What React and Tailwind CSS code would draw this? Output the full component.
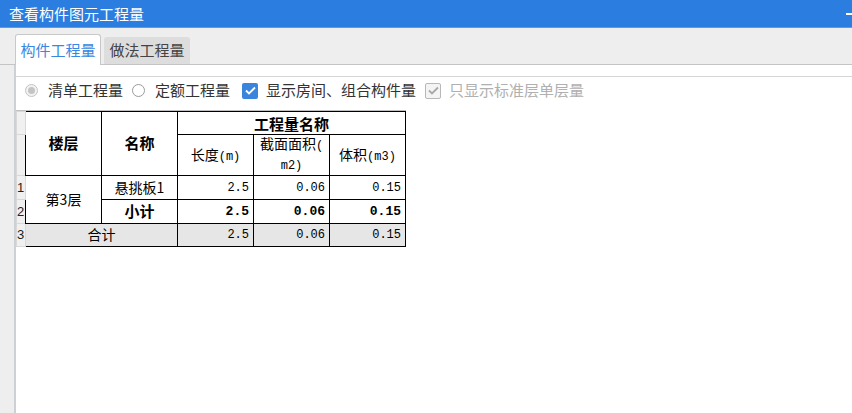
import React from 'react'

const cjk = { fontFamily: '"Noto Sans CJK SC", "Noto Sans", sans-serif' }
const mono = { fontFamily: '"Liberation Mono", "Noto Sans CJK SC", monospace' }
const sans = { fontFamily: '"Liberation Sans", "Noto Sans", sans-serif' }

const Radio = ({ checked, disabled }) => (
  <span
    className={`w-[13px] h-[13px] rounded-full border flex items-center justify-center ${
      disabled ? 'border-[#c4c4c4] bg-[#f2f2f2]' : 'border-[#9a9a9a] bg-white'
    }`}
  >
    {checked && <span className='w-[7px] h-[7px] rounded-full bg-[#c4c4c4]' />}
  </span>
)

const Check = ({ disabled }) => (
  <span
    className={`w-[16px] h-[16px] rounded-[2px] flex items-center justify-center ${
      disabled ? 'border border-[#b8b8b8] bg-[#f4f4f4]' : 'bg-[#3a84de]'
    }`}
  >
    <svg width='11' height='9' viewBox='0 0 11 9'>
      <path
        d='M1 4.5 L4 7.5 L10 1.5'
        fill='none'
        stroke={disabled ? '#a8a8a8' : '#ffffff'}
        strokeWidth='1.8'
      />
    </svg>
  </span>
)

const td = 'border border-black p-0'
const rn = 'border border-[#d8d8d8] bg-[#f0f0f0] p-0 text-[13px] text-[#222] text-left leading-none'
const num = 'border border-black p-0 text-right pr-[4px] text-[12px]'

const App = () => {
  return (
    <div className='w-[852px] h-[413px] bg-[#eeeeee] flex flex-col overflow-hidden' style={cjk}>
      <div className='h-[28px] bg-[#2b7ddf] flex items-center justify-between pl-[9px] border-b border-[#5b9ae6]'>
        <span className='text-white text-[15px] leading-none'>查看构件图元工程量</span>
        <span className='w-[6px] h-[2px] bg-white' />
      </div>

      <div className='h-[37px] flex items-end pl-[15px] border-b border-[#c4c4c4]'>
        <div className='w-[86px] h-[31px] -mb-px bg-white border border-b-0 border-[#c8c8c8] rounded-t-[3px] flex items-center justify-center text-[15px] text-[#3a87e0]'>
          构件工程量
        </div>
        <div className='ml-[3px] w-[86px] h-[27px] bg-[#dddddd] rounded-t-[3px] flex items-center justify-center text-[15px] text-[#444]'>
          做法工程量
        </div>
      </div>

      <div className='flex-1 ml-[14px] bg-white border-l-2 border-[#cdd1d6] flex flex-col'>
        <div className='h-[11px]' />
        <div className='h-[28px] border-t border-[#d6d6d6] flex items-center pl-[9px] text-[15px] text-[#333]'>
          <Radio checked disabled />
          <span className='ml-[10px]'>清单工程量</span>
          <span className='ml-[9px]'><Radio /></span>
          <span className='ml-[10px]'>定额工程量</span>
          <span className='ml-[12px]'><Check /></span>
          <span className='ml-[8px]'>显示房间、组合构件量</span>
          <span className='ml-[9px]'><Check disabled /></span>
          <span className='ml-[8px] text-[#b0b0b0]'>只显示标准层单层量</span>
        </div>

        <div className='mt-[6px] w-[390px] border-t border-[#c0c0c0]'>
          <table className='border-collapse table-fixed w-[390px]'>
            <colgroup>
              <col className='w-[9px]' />
              <col className='w-[76px]' />
              <col className='w-[76px]' />
              <col className='w-[76px]' />
              <col className='w-[76px]' />
              <col className='w-[76px]' />
            </colgroup>
            <tbody>
              <tr className='h-[23px]'>
                <td className={rn} />
                <td rowSpan={2} className={`${td} text-center text-[15px] font-bold`}>楼层</td>
                <td rowSpan={2} className={`${td} text-center text-[15px] font-bold`}>名称</td>
                <td colSpan={3} className={`${td} text-center text-[15px] font-bold leading-none`}>工程量名称</td>
              </tr>
              <tr className='h-[41px]'>
                <td className={rn} />
                <td className={`${td} text-center text-[14px]`}>
                  长度<span style={mono} className='text-[12px]'>(m)</span>
                </td>
                <td className={`${td} text-center text-[14px] leading-[17px]`}>
                  截面面积<span style={mono} className='text-[12px]'>(</span>
                  <br />
                  <span style={mono} className='text-[12px]'>m2)</span>
                </td>
                <td className={`${td} text-center text-[14px]`}>
                  体积<span style={mono} className='text-[12px]'>(m3)</span>
                </td>
              </tr>
              <tr className='h-[24px]'>
                <td className={rn} style={sans}>1</td>
                <td rowSpan={2} className={`${td} text-center text-[14px]`}>第3层</td>
                <td className={`${td} text-center text-[14px]`}>悬挑板1</td>
                <td className={num} style={mono}>2.5</td>
                <td className={num} style={mono}>0.06</td>
                <td className={num} style={mono}>0.15</td>
              </tr>
              <tr className='h-[23px]'>
                <td className={rn} style={sans}>2</td>
                <td className={`${td} text-center text-[15px] font-bold`}>小计</td>
                <td className={`${num} font-bold text-[13px]`} style={mono}>2.5</td>
                <td className={`${num} font-bold text-[13px]`} style={mono}>0.06</td>
                <td className={`${num} font-bold text-[13px]`} style={mono}>0.15</td>
              </tr>
              <tr className='h-[23px] bg-[#e6e6e6]'>
                <td className={rn} style={sans}>3</td>
                <td colSpan={2} className={`${td} text-center text-[14px]`}>合计</td>
                <td className={num} style={mono}>2.5</td>
                <td className={num} style={mono}>0.06</td>
                <td className={num} style={mono}>0.15</td>
              </tr>
            </tbody>
          </table>
        </div>
      </div>
    </div>
  )
}

export default App
